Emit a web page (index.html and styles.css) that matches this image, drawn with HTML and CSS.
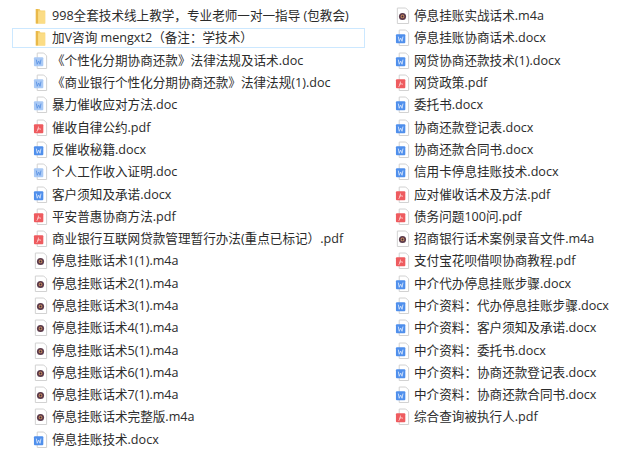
FILE: index.html
```html
<!DOCTYPE html>
<html lang="zh">
<head>
<meta charset="utf-8">
<title>文件列表</title>
<link rel="stylesheet" href="styles.css">
</head>
<body>
<svg class="defs" width="0" height="0" aria-hidden="true">
  <symbol id="folder" viewBox="0 0 16 18">
    <path d="M3 1.500h4l1 1.500h5v14H3z" fill="#f5cf6b"/>
    <path d="M3 1.500h2.500v15.500H3z" fill="#e9b94a"/>
    <path d="M5.500 4h7.500v13H5.500z" fill="#fbdc85"/>
  </symbol>
  <symbol id="doc" viewBox="0 0 16 18">
    <path d="M4.500.5h7l3 3v13.500h-10z" fill="#fff" stroke="#cfcfcf"/>
    <rect x="1" y="5" width="10" height="9.500" rx="1" fill="#a9c9f5"/>
    <path d="M3.500 7.500l1 5 1.500-3.500 1.500 3.500 1-5" fill="none" stroke="#5f95e4" stroke-width="1"/>
  </symbol>
  <symbol id="docx" viewBox="0 0 16 18">
    <path d="M4.500.5h7l3 3v13.500h-10z" fill="#fff" stroke="#cfcfcf"/>
    <rect x="1" y="5" width="10" height="9.500" rx="1" fill="#4f8fec"/>
    <path d="M3.500 7.500l1 5 1.500-3.500 1.500 3.500 1-5" fill="none" stroke="#cfe0fb" stroke-width="1"/>
  </symbol>
  <symbol id="pdf" viewBox="0 0 16 18">
    <path d="M4.500.5h7l3 3v13.500h-10z" fill="#fff" stroke="#cfcfcf"/>
    <rect x="1" y="5" width="10" height="9.500" rx="1" fill="#ee5b5f"/>
    <path d="M4 13c1-1 2-4 1.800-5.500M4.500 10.500c1.500-.8 3-.8 4 0" fill="none" stroke="#ffd0d0" stroke-width="1"/>
  </symbol>
  <symbol id="m4a" viewBox="0 0 16 18">
    <path d="M2.500.5h9l3 3v13.500h-12z" fill="#fff" stroke="#cfcfcf"/>
    <circle cx="8" cy="9.500" r="3.800" fill="#5b3a4a"/>
    <circle cx="8" cy="9.500" r="2" fill="#c98a60"/>
    <circle cx="8" cy="9.500" r="1" fill="#3a2a3a"/>
  </symbol>
</svg>
<main class="columns">
  <ul class="list list-left">
    <li class="row"><svg class="icon"><use href="#folder"/></svg><span>998全套技术线上教学，专业老师一对一指导 (包教会)</span></li>
    <li class="row selected"><svg class="icon"><use href="#folder"/></svg><span>加V咨询 mengxt2（备注：学技术）</span></li>
    <li class="row"><svg class="icon"><use href="#doc"/></svg><span>《个性化分期协商还款》法律法规及话术.doc</span></li>
    <li class="row"><svg class="icon"><use href="#doc"/></svg><span>《商业银行个性化分期协商还款》法律法规(1).doc</span></li>
    <li class="row"><svg class="icon"><use href="#doc"/></svg><span>暴力催收应对方法.doc</span></li>
    <li class="row"><svg class="icon"><use href="#pdf"/></svg><span>催收自律公约.pdf</span></li>
    <li class="row"><svg class="icon"><use href="#docx"/></svg><span>反催收秘籍.docx</span></li>
    <li class="row"><svg class="icon"><use href="#doc"/></svg><span>个人工作收入证明.doc</span></li>
    <li class="row"><svg class="icon"><use href="#docx"/></svg><span>客户须知及承诺.docx</span></li>
    <li class="row"><svg class="icon"><use href="#pdf"/></svg><span>平安普惠协商方法.pdf</span></li>
    <li class="row"><svg class="icon"><use href="#pdf"/></svg><span>商业银行互联网贷款管理暂行办法(重点已标记）.pdf</span></li>
    <li class="row"><svg class="icon"><use href="#m4a"/></svg><span>停息挂账话术1(1).m4a</span></li>
    <li class="row"><svg class="icon"><use href="#m4a"/></svg><span>停息挂账话术2(1).m4a</span></li>
    <li class="row"><svg class="icon"><use href="#m4a"/></svg><span>停息挂账话术3(1).m4a</span></li>
    <li class="row"><svg class="icon"><use href="#m4a"/></svg><span>停息挂账话术4(1).m4a</span></li>
    <li class="row"><svg class="icon"><use href="#m4a"/></svg><span>停息挂账话术5(1).m4a</span></li>
    <li class="row"><svg class="icon"><use href="#m4a"/></svg><span>停息挂账话术6(1).m4a</span></li>
    <li class="row"><svg class="icon"><use href="#m4a"/></svg><span>停息挂账话术7(1).m4a</span></li>
    <li class="row"><svg class="icon"><use href="#m4a"/></svg><span>停息挂账话术完整版.m4a</span></li>
    <li class="row"><svg class="icon"><use href="#docx"/></svg><span>停息挂账技术.docx</span></li>
  </ul>
  <ul class="list list-right">
    <li class="row"><svg class="icon"><use href="#m4a"/></svg><span>停息挂账实战话术.m4a</span></li>
    <li class="row"><svg class="icon"><use href="#docx"/></svg><span>停息挂账协商话术.docx</span></li>
    <li class="row"><svg class="icon"><use href="#docx"/></svg><span>网贷协商还款技术(1).docx</span></li>
    <li class="row"><svg class="icon"><use href="#pdf"/></svg><span>网贷政策.pdf</span></li>
    <li class="row"><svg class="icon"><use href="#docx"/></svg><span>委托书.docx</span></li>
    <li class="row"><svg class="icon"><use href="#docx"/></svg><span>协商还款登记表.docx</span></li>
    <li class="row"><svg class="icon"><use href="#docx"/></svg><span>协商还款合同书.docx</span></li>
    <li class="row"><svg class="icon"><use href="#docx"/></svg><span>信用卡停息挂账技术.docx</span></li>
    <li class="row"><svg class="icon"><use href="#pdf"/></svg><span>应对催收话术及方法.pdf</span></li>
    <li class="row"><svg class="icon"><use href="#pdf"/></svg><span>债务问题100问.pdf</span></li>
    <li class="row"><svg class="icon"><use href="#m4a"/></svg><span>招商银行话术案例录音文件.m4a</span></li>
    <li class="row"><svg class="icon"><use href="#pdf"/></svg><span>支付宝花呗借呗协商教程.pdf</span></li>
    <li class="row"><svg class="icon"><use href="#docx"/></svg><span>中介代办停息挂账步骤.docx</span></li>
    <li class="row"><svg class="icon"><use href="#docx"/></svg><span>中介资料：代办停息挂账步骤.docx</span></li>
    <li class="row"><svg class="icon"><use href="#docx"/></svg><span>中介资料：客户须知及承诺.docx</span></li>
    <li class="row"><svg class="icon"><use href="#docx"/></svg><span>中介资料：委托书.docx</span></li>
    <li class="row"><svg class="icon"><use href="#docx"/></svg><span>中介资料：协商还款登记表.docx</span></li>
    <li class="row"><svg class="icon"><use href="#docx"/></svg><span>中介资料：协商还款合同书.docx</span></li>
    <li class="row"><svg class="icon"><use href="#pdf"/></svg><span>综合查询被执行人.pdf</span></li>
  </ul>
</main>
</body>
</html>
```
FILE: styles.css
```css
html, body {
  margin: 0;
  padding: 0;
  background: #fff;
}
body {
  width: 640px;
  height: 462px;
  overflow: hidden;
  font-family: "Open Sans", "Noto Sans CJK SC", sans-serif;
  font-size: 12.6px;
  color: #2b2b2b;
}
.defs {
  position: absolute;
}
.columns {
  display: flex;
  padding-top: 5px;
}
.list {
  list-style: none;
  margin: 0;
  padding: 0;
}
.list-left {
  width: 353px;
  margin-left: 12px;
  flex: none;
}
.list-right {
  margin-left: 9px;
  flex: none;
}
.row {
  display: flex;
  align-items: center;
  gap: 4px;
  height: 22.3px;
  padding-left: 21px;
  box-sizing: border-box;
  white-space: nowrap;
  line-height: 20px;
}
.selected {
  height: 20px;
  margin: 1.15px 0;
  border: 1px solid #cce8ff;
  padding-left: 20px;
}
.icon {
  width: 15px;
  height: 18px;
  flex: none;
}
```
